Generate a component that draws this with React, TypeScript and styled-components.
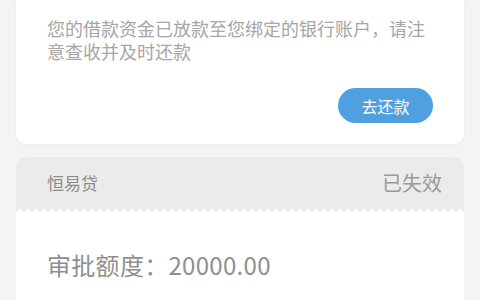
import styled, {createGlobalStyle} from 'styled-components';

const GlobalStyle = createGlobalStyle`
  html, body {
    margin: 0;
    padding: 0;
    background: #f4f4f4;
    font-family: "Noto Sans CJK SC", "Noto Sans", sans-serif;
  }
`;

const Page = styled.div`
  width: 480px;
  height: 300px;
  overflow: hidden;
  padding: 0 16px;
  box-sizing: border-box;
  display: flex;
  flex-direction: column;
  gap: 13px;
`;

const NoticeCard = styled.div`
  background: #fff;
  border-radius: 0 0 10px 10px;
  box-shadow: 0 1px 3px rgba(0, 0, 0, 0.04);
  padding: 17px 31px 21px;
  display: flex;
  flex-direction: column;
`;

const NoticeText = styled.p`
  margin: 0;
  font-size: 18px;
  line-height: 23px;
  color: #a6a6a6;
`;

const ButtonRow = styled.div`
  display: flex;
  justify-content: flex-end;
  margin-top: 25px;
`;

const RepayButton = styled.button`
  width: 95px;
  height: 35px;
  border: none;
  border-radius: 18px;
  background: #50a0e0;
  color: #fff;
  font-family: inherit;
  font-size: 16px;
  padding: 0;
`;

const LoanCard = styled.div`
  background: #fff;
  border-radius: 10px;
  overflow: hidden;
  flex-shrink: 0;
`;

const LoanHeader = styled.div`
  position: relative;
  height: 55px;
  background: #ebebeb;
  padding: 0 22px 4px 31px;
  display: flex;
  align-items: center;
  justify-content: space-between;
  box-sizing: border-box;

  &::after {
    content: '';
    position: absolute;
    left: 0;
    right: 0;
    bottom: 0;
    height: 4px;
    background: radial-gradient(circle at 4px 4px, #fff 2.6px, transparent 3.2px);
    background-size: 8px 4px;
  }
`;

const ProductName = styled.span`
  font-size: 17px;
  color: #8c8c8c;
`;

const Status = styled.span`
  font-size: 20px;
  color: #9a9a9a;
`;

const LoanBody = styled.div`
  padding: 38px 31px 40px;
`;

const Quota = styled.div`
  font-size: 24px;
  line-height: 30px;
  letter-spacing: 0.3px;
  color: #8f8f8f;
`;

export default function App() {
  return (
    <>
      <GlobalStyle />
      <Page>
        <NoticeCard>
          <NoticeText>
            您的借款资金已放款至您绑定的银行账户，请注意查收并及时还款
          </NoticeText>
          <ButtonRow>
            <RepayButton>去还款</RepayButton>
          </ButtonRow>
        </NoticeCard>
        <LoanCard>
          <LoanHeader>
            <ProductName>恒易贷</ProductName>
            <Status>已失效</Status>
          </LoanHeader>
          <LoanBody>
            <Quota>审批额度：20000.00</Quota>
          </LoanBody>
        </LoanCard>
      </Page>
    </>
  );
}
